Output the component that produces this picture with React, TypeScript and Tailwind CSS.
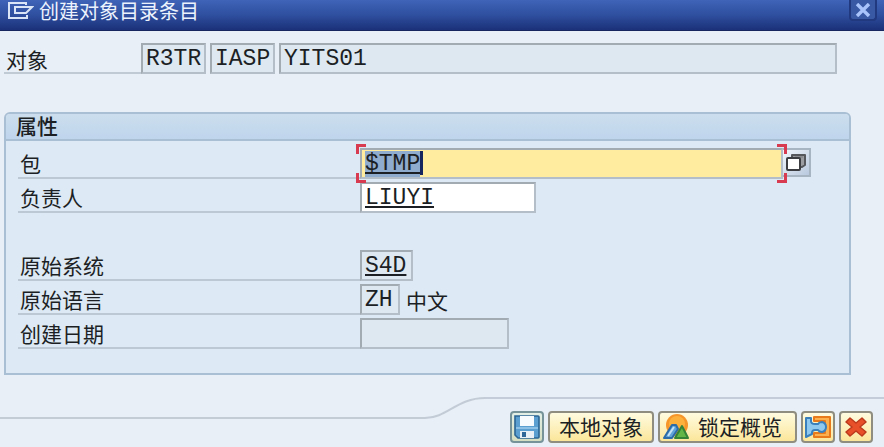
/**
 * Create Object Directory Entry Dialog
 * Package assignment form for a repository object
 */
import type { InputHTMLAttributes, ReactNode } from 'react';
import { clsx } from 'clsx';

const fieldBase =
  'h-[31px] min-w-0 border-2 border-t-[#a3abb2] border-l-[#a3abb2] border-r-[#b4bec8] border-b-[#b4bec8] px-[3px] font-["Liberation_Mono","Noto_Sans_CJK_SC",monospace] text-[23px] leading-[24px] text-[#1c1f24] outline-none';

const Field = ({ className, ...props }: InputHTMLAttributes<HTMLInputElement>) => (
  <input
    type="text"
    className={clsx(fieldBase, props.readOnly && 'bg-[#dde8f1]', className)}
    {...props}
  />
);

interface RowProps {
  id: string;
  label: string;
  children: ReactNode;
}

const Row = ({ id, label, children }: RowProps) => (
  <div className="flex h-[31px]">
    <label
      htmlFor={id}
      className="w-[342px] shrink-0 border-b-2 border-[#bcc8d3] pl-0.5 leading-[30px]"
    >
      {label}
    </label>
    {children}
  </div>
);

interface ToolButtonProps {
  label?: string;
  children?: ReactNode;
  cool?: boolean;
  className?: string;
}

const ToolButton = ({ label, children, cool, className }: ToolButtonProps) => (
  <button
    type="button"
    aria-label={label}
    className={clsx(
      'flex h-8 items-center rounded border-2 bg-linear-to-b',
      cool
        ? 'border-[#77939a] from-[#e3efe6] to-[#d5dec0]'
        : 'border-[#8f8d80] from-[#fffbe0] to-[#fbe699]',
      className
    )}
  >
    {children}
  </button>
);

const TitleIcon = () => (
  <svg className="h-5 w-7" viewBox="0 0 28 20" fill="none" stroke="#dbe5f8" strokeWidth="2" aria-hidden="true">
    <path d="M20 4V2H3v15h18v-3" />
    <path d="M9 6h17l-6 6H9z" />
  </svg>
);

const SearchHelpIcon = () => (
  <svg className="h-5 w-5" viewBox="0 0 20 20" strokeWidth="2" strokeLinejoin="round" aria-hidden="true">
    <path d="M6 2h13v10l-3 2H6z" fill="#9a9ca0" stroke="#55575b" />
    <path d="M9 4h8" stroke="#8a8c90" />
    <rect x="1" y="5" width="13" height="12" rx="1" fill="#fff" stroke="#3c3d40" />
  </svg>
);

const SaveIcon = () => (
  <svg className="h-6 w-7" viewBox="0 0 28 24" aria-hidden="true">
    <path d="M2 1h23q1 0 1 1v20q0 1-1 1H5l-3-3z" fill="#5a9fd0" stroke="#2b6594" strokeWidth="1.6" />
    <path d="M7 1h14v10H7z" fill="#f7fbfe" />
    <path d="M3 13h22" stroke="#8cc0e4" strokeWidth="2" />
    <path d="M7 16h14v7H7z" fill="#e9f1f7" />
    <path d="M9 17h4v5H9z" fill="#2f6898" />
  </svg>
);

const OverviewIcon = () => (
  <svg className="h-7 w-7 shrink-0" viewBox="0 0 28 28" aria-hidden="true">
    <circle cx="15" cy="12" r="11" fill="#f6952a" />
    <circle cx="15" cy="11" r="8" fill="#fdb13c" />
    <path d="M2 25 10 12h4l2 4-6 9z" fill="#5fa3d9" stroke="#2c6ba8" strokeWidth="2" strokeLinejoin="round" />
    <path d="m12 14-6 9" stroke="#c6e2f5" strokeWidth="2" />
    <path d="M13 25 20 13l6 12z" fill="#62b648" stroke="#338237" strokeWidth="2" strokeLinejoin="round" />
  </svg>
);

const LockIcon = () => (
  <svg className="h-6 w-7" viewBox="0 0 28 24" strokeLinejoin="round" aria-hidden="true">
    <path
      d="M10 2h16v20H10v-4h11V6H10z"
      fill="#fcb04e"
      stroke="#e87a1c"
      strokeWidth="2"
    />
    <path
      d="M2 3h5v3q0 3 4 3h3q1-2 4-2 4 1 4 5t-4 5q-3 0-4-2h-3q-3 0-3 3v1l-6 3z"
      fill="#8fc9f0"
      stroke="#3a80bd"
      strokeWidth="2"
    />
  </svg>
);

const CancelIcon = () => (
  <svg className="h-5 w-[22px]" viewBox="0 0 22 20" aria-hidden="true">
    <path
      d="M5 1 11 6l6-5 4 4-6 5 6 5-4 4-6-5-6 5-4-4 6-5-6-5z"
      fill="#e8502a"
      stroke="#bd3a1c"
      strokeWidth="1.5"
      strokeLinejoin="round"
    />
  </svg>
);

export default function App() {
  return (
    <div className="flex min-h-screen flex-col bg-[#e8eff6] font-['Noto_Sans_CJK_SC',sans-serif] text-[21px] text-[#1c1f24]">
      {/* Title bar */}
      <header className="flex h-[31px] items-center border-b border-[#18265f] bg-linear-to-b from-[#3f64b8] via-[#2f4f9f] to-[#1b3179] pr-[7px] pb-2 pl-1.5 text-[#edf3fd]">
        <TitleIcon />
        <h1 className="ml-[5px] text-[20px] leading-[20px]">创建对象目录条目</h1>
        <button
          type="button"
          aria-label="关闭"
          className="ml-auto flex h-[21px] w-7 items-center justify-center self-start rounded-b border-2 border-t-0 border-[#20397f] bg-[#3a59a5]"
        >
          <svg className="h-3.5 w-4" viewBox="0 0 16 14" stroke="#a9c4fb" strokeWidth="3.4" aria-hidden="true">
            <path d="m2 1 12 12M14 1 2 13" />
          </svg>
        </button>
      </header>

      {/* Object key */}
      <div className="mt-3 mr-[47px] ml-1 flex h-[31px]">
        <label htmlFor="object" className="w-[137px] shrink-0 border-b-2 border-[#bfcad4] pl-0.5 leading-[32px]">
          对象
        </label>
        <div className="flex min-w-0 flex-1 gap-1">
          <Field id="object" readOnly defaultValue="R3TR" className="w-[65px]" />
          <Field aria-label="对象类型" readOnly defaultValue="IASP" className="w-[65px]" />
          <Field aria-label="对象名称" readOnly defaultValue="YITS01" className="flex-1" />
        </div>
      </div>

      {/* Attributes */}
      <section className="mt-[38px] mr-[33px] ml-1 rounded-t-md border-2 border-[#a9bfd4] bg-[#dde9f4]">
        <h2 className="h-[27px] rounded-t border-b-2 border-[#a9bfd4] bg-linear-to-b from-[#ccdeee] to-[#bfd5ec] pl-2.5 font-medium leading-[22px]">
          属性
        </h2>
        <div className="flex flex-col gap-[3px] pt-[7px] pr-[38px] pb-6 pl-3">
          <Row id="package" label="包">
            <div className="relative flex flex-1">
              <Field
                id="package"
                autoFocus
                defaultValue="$TMP"
                onFocus={(e) => e.target.select()}
                className="flex-1 bg-[#ffec9e] underline selection:bg-[#8fabcd] selection:text-[#1c1f24]"
              />
              {/* Text cursor */}
              <span className="absolute top-[3px] left-[60px] h-6 w-[3px] bg-[#17255f]" />
              {/* Focus corners */}
              <span className="absolute -top-1 -left-1 h-2.5 w-2.5 border-t-[3px] border-l-[3px] border-[#d83a50]" />
              <span className="absolute -bottom-1 -left-1 h-2.5 w-2.5 border-b-[3px] border-l-[3px] border-[#d83a50]" />
              <span className="absolute -top-1 -right-1 h-2.5 w-2.5 border-t-[3px] border-r-[3px] border-[#d83a50]" />
              <span className="absolute -right-1 -bottom-1 h-2.5 w-2.5 border-r-[3px] border-b-[3px] border-[#d83a50]" />
            </div>
            <button
              type="button"
              aria-label="搜索帮助"
              className="flex h-[29px] w-7 items-center justify-center border-2 border-l-0 border-[#a7b4c2] bg-linear-to-br from-[#f2f6fb] to-[#b9c9de]"
            >
              <SearchHelpIcon />
            </button>
          </Row>
          <Row id="owner" label="负责人">
            <Field id="owner" defaultValue="LIUYI" className="w-44 bg-white underline" />
          </Row>
          <div className="h-[31px]" />
          <Row id="system" label="原始系统">
            <Field id="system" readOnly defaultValue="S4D" className="w-[53px] underline" />
          </Row>
          <Row id="language" label="原始语言">
            <Field id="language" readOnly defaultValue="ZH" className="w-10" />
            <span className="ml-1.5 leading-[32px]">中文</span>
          </Row>
          <Row id="created" label="创建日期">
            <Field id="created" readOnly className="w-[149px]" />
          </Row>
        </div>
      </section>

      {/* Action bar */}
      <footer className="mt-auto flex h-[50px]">
        <div className="h-[22px] flex-1 border-b-2 border-[#c3ccd4]" />
        <svg className="h-[22px] w-[60px] shrink-0" viewBox="0 0 60 22" fill="none" stroke="#c3ccd6" strokeWidth="2" aria-hidden="true">
          <path d="M0 21C22 21 32 1 60 1" />
        </svg>
        <div className="flex gap-1 border-t-2 border-[#c3ccd8] pt-3 pr-[11px] pl-[25px]">
          <ToolButton label="保存" cool className="w-[34px] justify-center">
            <SaveIcon />
          </ToolButton>
          <ToolButton className="w-[106px] justify-center">本地对象</ToolButton>
          <ToolButton className="w-[139px] gap-2 pl-0.5">
            <OverviewIcon />
            锁定概览
          </ToolButton>
          <ToolButton label="锁定" className="w-[34px] justify-center">
            <LockIcon />
          </ToolButton>
          <ToolButton label="取消" className="w-[34px] justify-center">
            <CancelIcon />
          </ToolButton>
        </div>
      </footer>
    </div>
  );
}
